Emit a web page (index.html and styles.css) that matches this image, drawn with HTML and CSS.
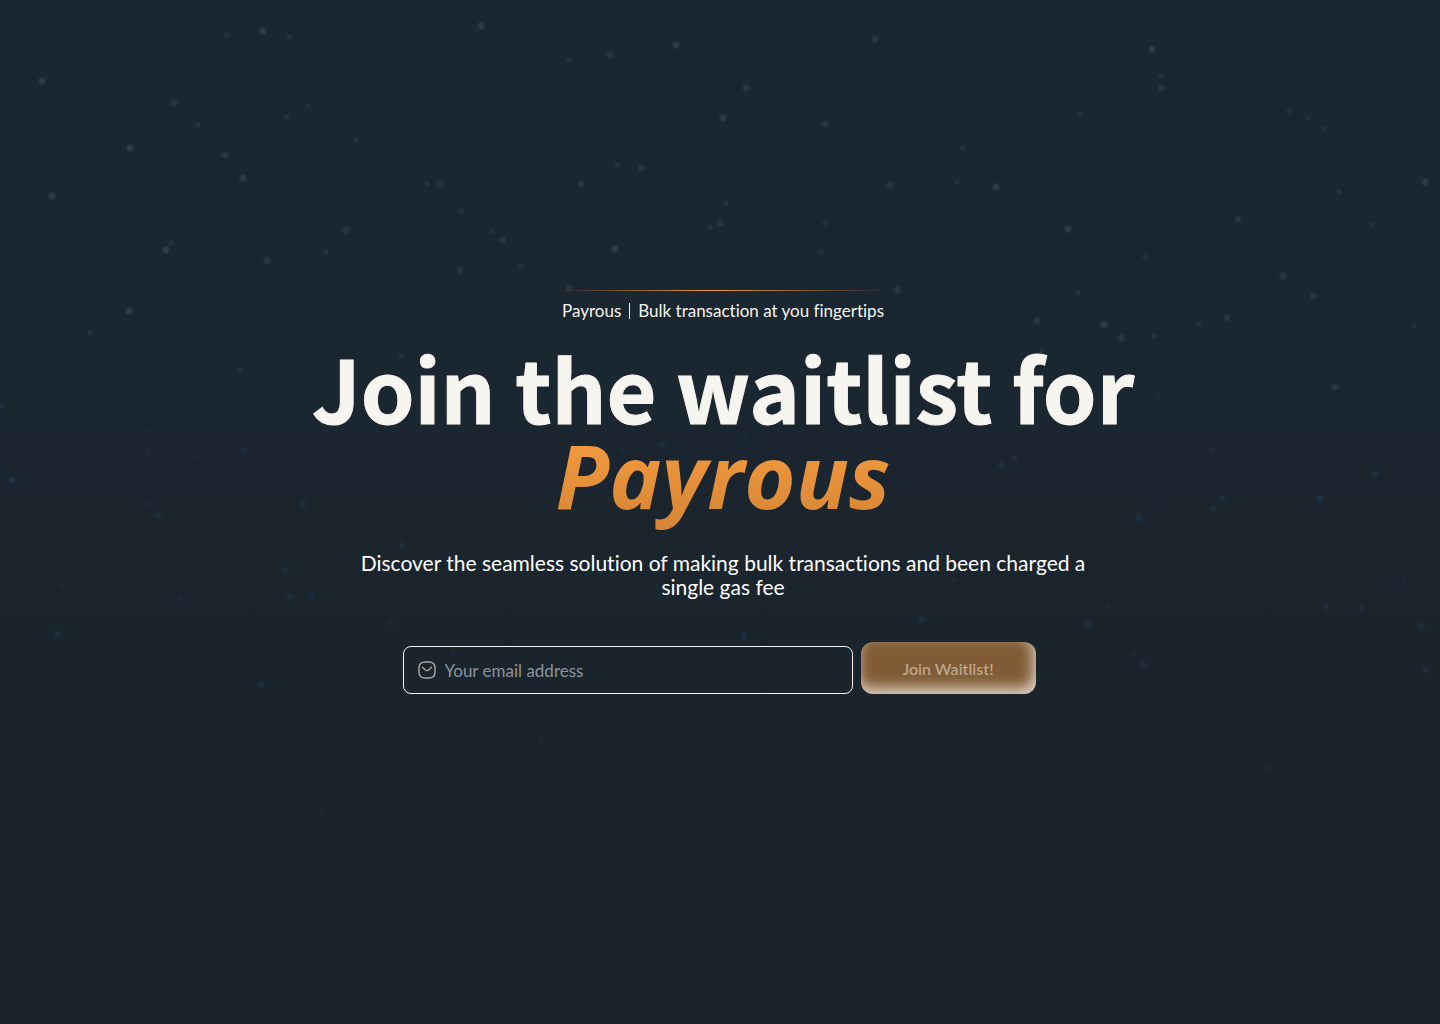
FILE: index.html
```html
<!DOCTYPE html>
<html lang="en">
<head>
    <meta charset="UTF-8">
    <meta name="viewport" content="width=device-width, initial-scale=1.0">
    <title>Payrous Waitlist</title>
    <link rel="stylesheet" href="styles.css">
</head>
<body>
    <svg class="stars" id="stars" viewBox="0 0 1440 1024" preserveAspectRatio="xMidYMid slice" aria-hidden="true">
        <defs>
            <radialGradient id="whiteStar">
                <stop offset="0" stop-color="#34424e"/>
                <stop offset="0.4" stop-color="#2c3a46"/>
                <stop offset="1" stop-color="#2c3a46" stop-opacity="0"/>
            </radialGradient>
            <radialGradient id="blueStar">
                <stop offset="0" stop-color="#1f354a"/>
                <stop offset="0.4" stop-color="#1c2f42"/>
                <stop offset="1" stop-color="#1c2f42" stop-opacity="0"/>
            </radialGradient>
        </defs>
    </svg>

    <main class="hero">
        <div class="line"></div>
        <div class="tagline">
            <span>Payrous</span>
            <span class="divider"></span>
            <span>Bulk transaction at you fingertips</span>
        </div>

        <h1>Join the waitlist for <em>Payrous</em></h1>

        <p class="description">Discover the seamless solution of making bulk transactions and been charged a single gas fee</p>

        <form class="waitlist" onsubmit="return false">
            <label class="field" for="email">
                <svg width="18" height="18" viewBox="0 0 18 18" fill="none" stroke="#a5a4a2" stroke-width="1.5" stroke-linecap="round" stroke-linejoin="round" aria-hidden="true">
                    <path d="M7 1h4c4 0 6 2 6 6v4c0 4-2 6-6 6H7c-4 0-6-2-6-6V7c0-4 2-6 6-6z"/>
                    <path d="M4.500 6.300l2.600 2.500c1.100 1 2.700 1 3.800 0l2.600-2.500"/>
                </svg>
                <input type="email" id="email" placeholder="Your email address" aria-label="Your email address">
            </label>
            <button type="submit" disabled>Join Waitlist!</button>
        </form>
    </main>

    <script>
        // x, y, brightness
        const whiteStars = [
            [42, 81, 3], [227, 35, 1], [263, 31, 3], [289, 37, 1], [174, 103, 2], [198, 125, 1],
            [130, 148, 3], [225, 155, 2], [243, 178, 3], [52, 196, 3], [308, 106, 1], [287, 117, 1],
            [356, 140, 1], [427, 184, 1], [440, 184, 1], [461, 211, 1], [346, 230, 2], [326, 252, 1],
            [171, 243, 1], [166, 250, 3], [267, 261, 2], [460, 270, 2], [129, 311, 3], [90, 333, 1],
            [481, 26, 3], [569, 60, 1], [610, 55, 2], [676, 45, 3], [875, 39, 2], [746, 88, 2],
            [723, 118, 3], [825, 124, 2], [617, 165, 1], [641, 168, 2], [581, 184, 2], [726, 203, 1],
            [710, 227, 1], [720, 223, 2], [503, 240, 2], [492, 231, 1], [521, 266, 1], [615, 249, 3],
            [569, 288, 2], [897, 290, 2], [890, 185, 2], [957, 182, 1], [825, 223, 1], [821, 252, 1],
            [963, 148, 1], [1152, 49, 3], [1161, 76, 1], [1161, 88, 2], [1080, 113, 1], [1289, 111, 1],
            [1308, 118, 1], [1324, 129, 1], [996, 187, 3], [1068, 229, 3], [1425, 182, 3], [1339, 192, 1],
            [1238, 219, 2], [1372, 225, 1], [1145, 257, 1], [1283, 276, 2], [1313, 296, 2], [1078, 293, 1],
            [1037, 321, 2], [1104, 325, 3], [1199, 324, 1], [1227, 318, 2], [1121, 338, 2], [1154, 336, 1],
            [1414, 326, 1], [401, 356, 1], [1041, 352, 1], [1335, 387, 2], [240, 370, 1]
        ];
        const blueStars = [
            [1, 406, 2], [149, 431, 1], [148, 451, 1], [195, 456, 1], [244, 450, 2], [12, 480, 3],
            [148, 504, 1], [158, 515, 2], [167, 544, 1], [303, 504, 2], [285, 570, 2], [62, 586, 1],
            [57, 634, 2], [290, 597, 2], [312, 595, 2], [391, 623, 1], [261, 685, 2], [180, 599, 1],
            [662, 445, 2], [622, 450, 1], [745, 439, 1], [1001, 465, 2], [1015, 458, 2], [1159, 396, 1],
            [1212, 450, 1], [1289, 488, 1], [1320, 498, 3], [1375, 474, 3], [1222, 498, 2], [1213, 509, 2],
            [1139, 518, 3], [1161, 504, 1], [1326, 607, 2], [1362, 608, 2], [1404, 579, 1], [1421, 625, 2],
            [1425, 670, 2], [1089, 624, 3], [1108, 607, 1], [1134, 654, 1], [1143, 665, 2], [921, 619, 2],
            [744, 636, 2], [954, 580, 1], [402, 545, 2], [453, 653, 1], [541, 739, 1], [1270, 768, 1],
            [321, 813, 1]
        ];

        function drawStars(list, gradientId) {
            const svg = document.getElementById('stars');
            list.forEach(([x, y, level]) => {
                const star = document.createElementNS('http://www.w3.org/2000/svg', 'circle');
                star.setAttribute('cx', x);
                star.setAttribute('cy', y);
                star.setAttribute('r', level === 1 ? 4 : 5);
                star.setAttribute('fill', `url(#${gradientId})`);
                star.setAttribute('opacity', (level + 1) / 4);
                svg.appendChild(star);
            });
        }

        drawStars(whiteStars, 'whiteStar');
        drawStars(blueStars, 'blueStar');
    </script>
</body>
</html>
```

FILE: styles.css
```css
* {
    box-sizing: border-box;
}
body {
    margin: 0;
    min-height: 100vh;
    background: linear-gradient(#1a2631 0%, #1a2630 40%, #1a242c 70%, #1a242c 100%);
    color: #f6f5ef;
    font-family: Lato, sans-serif;
    font-size: 16px;
    font-variant-ligatures: none;
}
.stars {
    position: absolute;
    top: 0;
    left: 0;
    width: 100%;
    height: 100%;
    z-index: -1;
}
.hero {
    display: flex;
    flex-direction: column;
    align-items: center;
    justify-content: center;
    min-height: 100vh;
    padding: 0 0 40px 6px;
}
.line {
    width: 336px;
    max-width: 100%;
    height: 1px;
    background: linear-gradient(90deg, rgba(240, 149, 58, 0), #f79a3c 46%, rgba(240, 149, 58, 0));
}
.tagline {
    display: flex;
    align-items: center;
    gap: 8px;
    margin-top: 8px;
    font-size: 17px;
    line-height: 24px;
}
.divider {
    width: 1px;
    height: 16px;
    background: #f6f5ef;
}
h1 {
    max-width: 900px;
    margin: 21px 0 0;
    font-family: "Noto Sans CJK SC", sans-serif;
    font-size: 86px;
    font-weight: 700;
    line-height: 86px;
    text-align: center;
    -webkit-text-stroke: 1px #f6f5ef;
}
h1 em {
    display: block;
    padding-bottom: 18px;
    font-family: "Open Sans", sans-serif;
    font-size: 88px;
    line-height: 90px;
    background: linear-gradient(#f79c40, #d28334);
    background-clip: text;
    -webkit-background-clip: text;
    color: transparent;
    -webkit-text-stroke: 0;
}
.description {
    max-width: 760px;
    margin: 13px 0 0;
    color: #fff;
    font-size: 21px;
    line-height: 24px;
    text-align: center;
}
.waitlist {
    display: flex;
    align-items: flex-end;
    gap: 8px;
    margin-top: 43px;
    padding-right: 8px;
}
.field {
    display: flex;
    align-items: center;
    gap: 9px;
    width: 450px;
    height: 48px;
    padding: 0 14px;
    border: 1px solid #f6f5ef;
    border-radius: 8px;
}
.field svg {
    flex: none;
}
.field input {
    flex: 1;
    min-width: 0;
    padding: 0;
    border: none;
    outline: none;
    background: none;
    color: #fff;
    font-family: inherit;
    font-size: 17px;
}
.field input::placeholder {
    color: #8c939d;
    opacity: 1;
}
button {
    width: 175px;
    height: 52px;
    border: none;
    border-radius: 12px;
    background: #815b35;
    box-shadow: inset -3px -6px 14px rgba(240, 230, 220, 0.85);
    color: #bda68c;
    font-family: inherit;
    font-size: 16px;
    font-weight: 600;
    font-variant-ligatures: none;
}
@media (max-width: 700px) {
    h1, h1 em {
        font-size: 48px;
        line-height: 52px;
    }
    .waitlist {
        flex-direction: column;
        align-items: center;
        width: 100%;
    }
    .field {
        width: 100%;
    }
}
```
